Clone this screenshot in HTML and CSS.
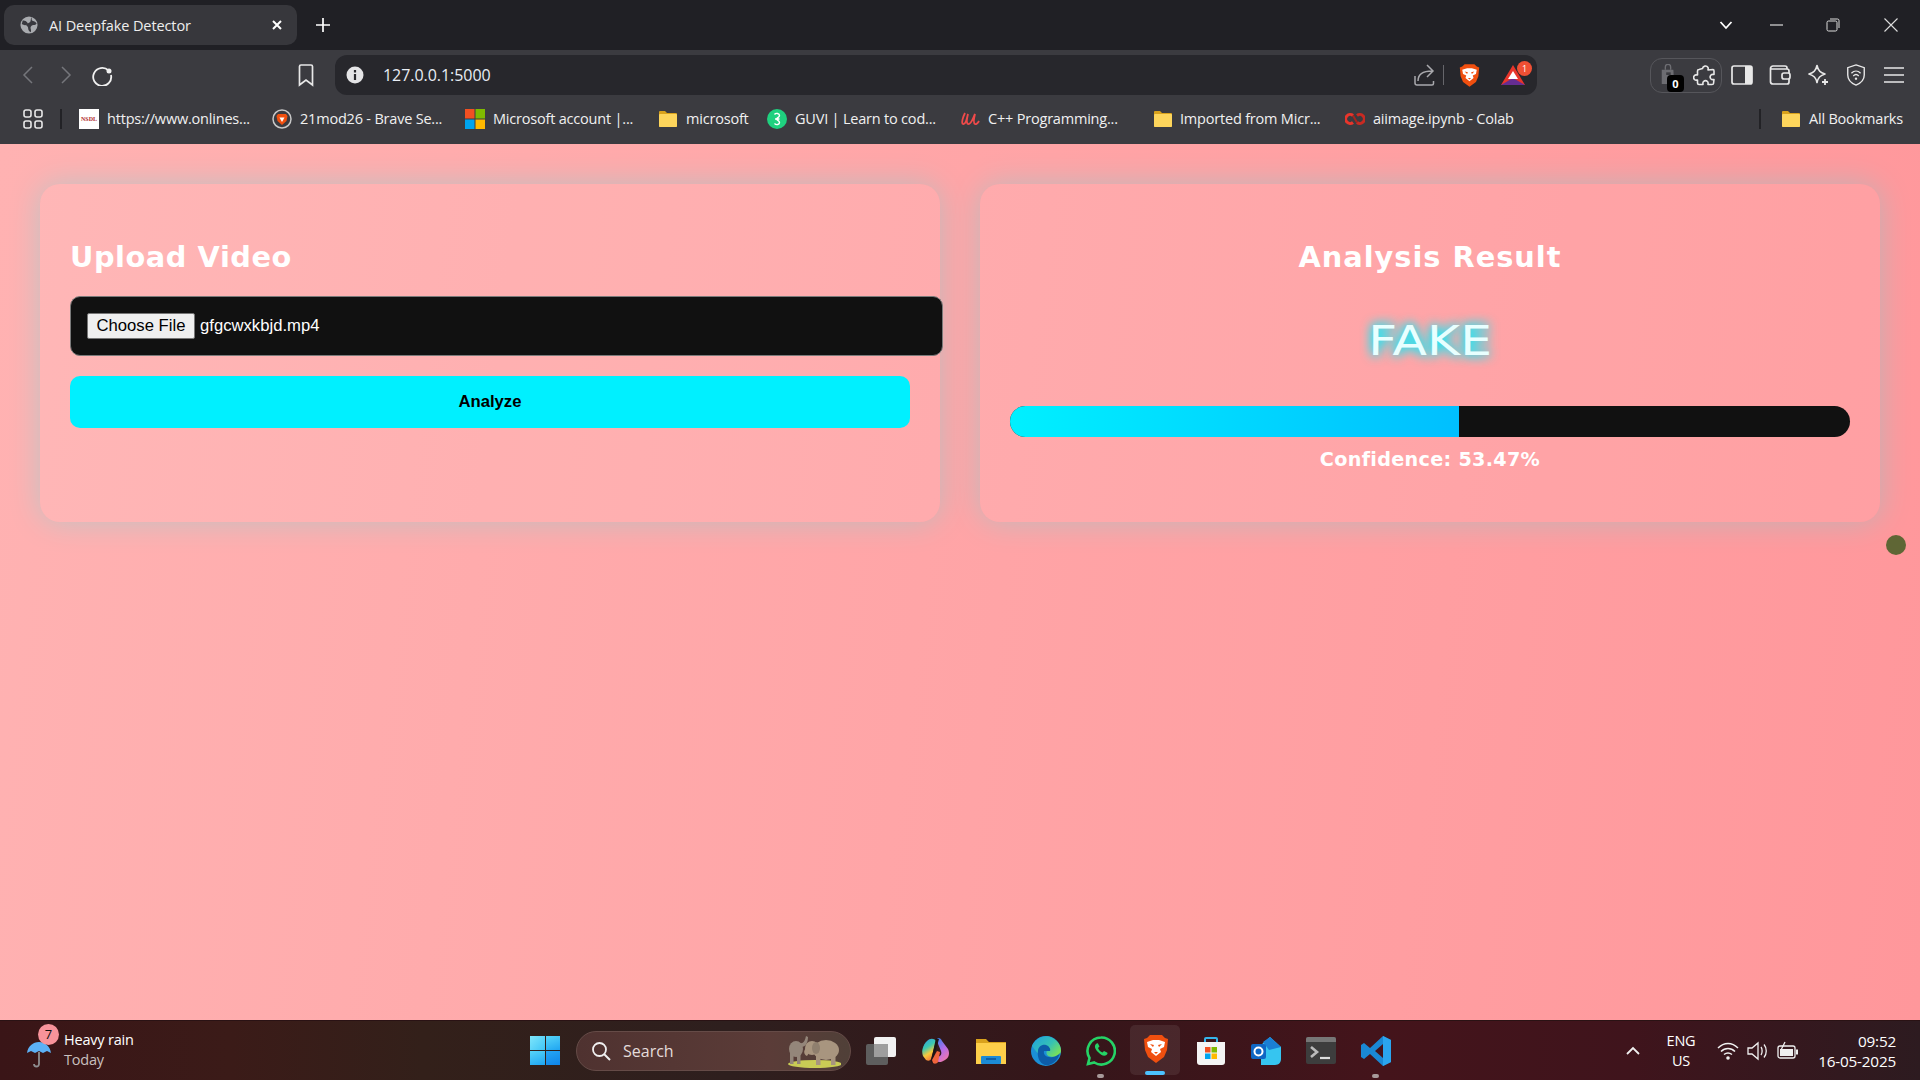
FILE: index.html
```html
<!DOCTYPE html>
<html lang="en">
<head>
<meta charset="utf-8">
<title>AI Deepfake Detector</title>
<link rel="stylesheet" href="styles.css">
</head>
<body>
<div class="screen">
  <header class="chrome">
    <div class="tabstrip">
      <div class="tab">
        <svg class="tab-globe" viewBox="0 0 20 20"><circle cx="10" cy="10" r="9.500" fill="#a9abaf"/><path d="M3 5c2-.5 4 .5 5 2s0 2.500-1.500 3S4 10 2 9zM12.500 1c1 2 0 3 1 4s3 .5 5 3c0 0-1 2-2.500 2s-3 0-4 2 1 3 0 6c-2-.5-3-3-3-5s-2-1.500-2-3 3-2 4-3 1-4 1.500-6z" fill="#38383e"/></svg>
        <span class="tab-title">AI Deepfake Detector</span>
        <svg class="tab-x" viewBox="0 0 12 12"><path d="M2 2l8 8M10 2l-8 8" stroke="#fff" stroke-width="2" fill="none"/></svg>
      </div>
      <div class="newtab"><svg class="i14" viewBox="0 0 14 14"><path d="M7 0v14M0 7h14" stroke="#fff" stroke-width="1.700"/></svg></div>
      <div class="spacer"></div>
      <div class="winbtn w-chev"><svg class="i14" viewBox="0 0 14 14"><path d="M1.500 4l5.500 6 5.500-6" stroke="#fff" stroke-width="1.800" fill="none"/></svg></div>
      <div class="winbtn w-min"><svg class="i14" viewBox="0 0 14 14"><path d="M0 7h13" stroke="#ddd" stroke-width="1.200"/></svg></div>
      <div class="winbtn w-res"><svg class="i14" viewBox="0 0 14 14"><rect x="1" y="3" width="10" height="10" rx="1.500" stroke="#ddd" fill="none"/><path d="M4 1h7.500a1.500 1.500 0 0 1 1.500 1.500V10" stroke="#ddd" fill="none"/></svg></div>
      <div class="winbtn w-close"><svg class="i14" viewBox="0 0 14 14"><path d="M.500.500l13 13M13.500.500l-13 13" stroke="#ddd" stroke-width="1.100"/></svg></div>
    </div>

    <div class="toolbar">
      <div class="tcell t-back"><svg class="i20" viewBox="0 0 20 20"><path d="M13 2L5 10l8 8" stroke="#75767b" stroke-width="1.500" fill="none"/></svg></div>
      <div class="tcell"><svg class="i20" viewBox="0 0 20 20"><path d="M7 2l8 8-8 8" stroke="#75767b" stroke-width="1.500" fill="none"/></svg></div>
      <div class="tcell t-reload"><svg class="i22" viewBox="0 0 22 22"><path d="M17.500 6.500A9 9 0 1 0 20 11" stroke="#f0f0f0" stroke-width="1.800" fill="none"/><circle cx="18" cy="7" r="2.500" fill="#f0f0f0"/></svg></div>
      <div class="spacer"></div>
      <div class="tcell bookmark-cell"><svg class="i24" viewBox="0 0 24 24"><path d="M5.500 3.500a1.500 1.500 0 0 1 1.500-1.500h10a1.500 1.500 0 0 1 1.500 1.500V22L12 17l-6.500 5z" stroke="#e8e8e8" stroke-width="1.700" fill="none"/></svg></div>
      <div class="omnibox">
        <svg class="omni-info" viewBox="0 0 18 18"><circle cx="9" cy="9" r="8.500" fill="#e4e4e6"/><path d="M9 4v2.500M9 8v6" stroke="#27272c" stroke-width="2.200"/></svg>
        <span class="url">127.0.0.1:5000</span>
        <div class="spacer"></div>
        <svg class="i22 omni-share" viewBox="0 0 22 22"><path d="M1 12v7a2 2 0 0 0 2 2h15a1.500 1.500 0 0 0 1.500-1.500V17M4 17c0-6 4-10 14-10M13 1l6 6-6 6" stroke="#a9a9ad" stroke-width="1.500" fill="none"/></svg>
        <span class="omni-sep"></span>
        <svg class="omni-brave" viewBox="0 0 26 30"><use href="#lion"/></svg>
        <span class="bat">
          <svg class="bat-tri" viewBox="0 0 24 20"><path d="M12 0l12 20H0z" fill="#e8352b"/><path d="M0 20l12-7 12 7z" fill="#662d91"/><path d="M12 6l5 8H7z" fill="#fff"/></svg>
          <span class="bat-badge">1</span>
        </span>
      </div>
      <div class="extgroup">
        <span class="shop">
          <svg class="shop-ic" viewBox="0 0 18 24"><path d="M2 6h13l1 16H2z" fill="#6d6d72"/><path d="M6 6V3a3 3 0 0 1 6 0v3" stroke="#6d6d72" stroke-width="1.500" fill="none"/><path d="M7 9h5v3H7z" fill="#3b3b40"/></svg>
          <span class="shop-badge">0</span>
        </span>
        <svg class="i24 ext-puzzle" viewBox="0 0 24 24"><path d="M9.500 5.500a3 3 0 0 1 5.500-1c.5 1 0 1.500 0 2.500l5-.5c1 0 1 .5 1 1.500v3.500c-1 0-2-.5-3 .5a3 3 0 0 0 0 4c1 1 2 .5 3 .5l-.5 4c0 1-.5 1-1.500 1h-4c0-1 .5-2-.5-3a3 3 0 0 0-4 0c-1 1-.5 2-.5 3H6c-1 0-1.500-.5-1.500-1.500V17c-1 0-2 .5-3-.5a3 3 0 0 1 0-4c1-1 2-.5 3-.5V8c0-1 .5-1.500 1.500-1.500z" stroke="#e8e8e8" stroke-width="1.600" fill="none" stroke-linejoin="round"/></svg>
      </div>
      <div class="tcell"><svg class="i22" viewBox="0 0 22 22"><rect x="1" y="2" width="20" height="18" rx="2" stroke="#e8e8e8" stroke-width="1.700" fill="none"/><rect x="14" y="2" width="7" height="18" fill="#e8e8e8"/></svg></div>
      <div class="tcell"><svg class="i22" viewBox="0 0 22 22"><path d="M18 5V4a2 2 0 0 0-2-2H4a2.500 2.500 0 0 0-2.500 2.500V18A2.500 2.500 0 0 0 4 20h14a2 2 0 0 0 2-2v-3M1.500 5H18a2 2 0 0 1 2 2v2" stroke="#e8e8e8" stroke-width="1.700" fill="none"/><rect x="13" y="9" width="8" height="6" rx="2" stroke="#e8e8e8" stroke-width="1.700" fill="none"/></svg></div>
      <div class="tcell"><svg class="i22" viewBox="0 0 22 22"><path d="M10 1.500c1 5 3 7 8 8.500-5 1.500-7 3.500-8 8.500-1-5-3-7-8-8.500 5-1.500 7-3.500 8-8.500z" stroke="#e8e8e8" stroke-width="1.700" fill="none" stroke-linejoin="round"/><path d="M18 15v6M15 18h6" stroke="#e8e8e8" stroke-width="1.800"/></svg></div>
      <div class="tcell"><svg class="i22" viewBox="0 0 22 24"><path d="M11 1l9 3v8c0 6-4 9-9 11-5-2-9-5-9-11V4z" stroke="#e8e8e8" stroke-width="1.500" fill="none"/><path d="M6 10c3-3 7-3 10 0M8 13c2-2 4-2 6 0" stroke="#e8e8e8" stroke-width="1.500" fill="none"/><circle cx="11" cy="16" r="1.300" fill="#e8e8e8"/></svg></div>
      <div class="tcell"><svg class="i22" viewBox="0 0 22 22"><path d="M1 4h20M1 11h20M1 18h20" stroke="#e8e8e8" stroke-width="1.700"/></svg></div>
    </div>

    <nav class="bookmarks">
      <svg class="apps" viewBox="0 0 20 20"><g stroke="#e8e8e8" stroke-width="1.600" fill="none"><rect x="1" y="1" width="7" height="7" rx="2"/><rect x="12" y="1" width="7" height="7" rx="2"/><rect x="1" y="12" width="7" height="7" rx="2"/><rect x="12" y="12" width="7" height="7" rx="2"/></g></svg>
      <span class="bm-sep bm-sep-a"></span>
      <div class="bm bm-1"><span class="nsdl"><span class="nsdl-t">NSDL</span></span><span class="bm-t">https://www.onlines...</span></div>
      <div class="bm bm-2"><svg class="fav" viewBox="0 0 20 20"><circle cx="10" cy="10" r="9" fill="#3a3a3f" stroke="#c8c8c8" stroke-width="1.500"/><path d="M6 5h8l1.500 2-1 5-4.500 4-4.500-4-1-5z" fill="#f04f0f"/><path d="M7.500 8.500h5L10 13z" fill="#fff"/></svg><span class="bm-t">21mod26 - Brave Se...</span></div>
      <div class="bm bm-3"><svg class="fav" viewBox="0 0 20 20"><path d="M0 0h9.500v9.500H0z" fill="#f25022"/><path d="M10.500 0H20v9.500h-9.500z" fill="#7fba00"/><path d="M0 10.500h9.500V20H0z" fill="#00a4ef"/><path d="M10.500 10.500H20V20h-9.500z" fill="#ffb900"/></svg><span class="bm-t">Microsoft account |...</span></div>
      <div class="bm bm-4"><svg class="fav" viewBox="0 0 20 20"><use href="#folder"/></svg><span class="bm-t">microsoft</span></div>
      <div class="bm bm-5"><svg class="fav" viewBox="0 0 20 20"><circle cx="10" cy="10" r="10" fill="#1fd17f"/><path d="M7.500 5.500c1.500-2 5-1 5 1s-3 2-3 3.500 3 1.500 3 3.500-3 3-5 1M8 10h4.500" stroke="#fff" stroke-width="1.400" fill="none"/></svg><span class="bm-t">GUVI | Learn to cod...</span></div>
      <div class="bm bm-6"><svg class="fav" viewBox="0 0 20 20"><path d="M5 4C3 8 1 14 3 15c3 1 4-7 5-10-1 4-2 9 0 10 3 1 5-6 7-10-1 4-2 9 0 10 1 .5 3-1 4-3" stroke="#ef4a4a" stroke-width="1.800" fill="none"/></svg><span class="bm-t">C++ Programming...</span></div>
      <div class="bm bm-7"><svg class="fav" viewBox="0 0 20 20"><use href="#folder"/></svg><span class="bm-t">Imported from Micr...</span></div>
      <div class="bm bm-8"><svg class="fav" viewBox="0 0 20 14"><path d="M8 3.500A4.500 4.500 0 1 0 8 10.500" stroke="#e8352b" stroke-width="3" fill="none"/><path d="M12 3.500a4.500 4.500 0 1 1 0 7" stroke="#c92a22" stroke-width="3" fill="none"/><path d="M8 3.500l4 7" stroke="#a8241d" stroke-width="2"/></svg><span class="bm-t">aiimage.ipynb - Colab</span></div>
      <div class="spacer"></div>
      <span class="bm-sep bm-sep-b"></span>
      <div class="bm bm-all"><svg class="fav" viewBox="0 0 20 20"><use href="#folder"/></svg><span class="bm-t">All Bookmarks</span></div>
    </nav>
  </header>

  <main class="page">
    <section class="card">
      <h2 class="card-title">Upload Video</h2>
      <div class="file-field">
        <button class="file-btn" type="button">Choose File</button>
        <span class="file-name">gfgcwxkbjd.mp4</span>
      </div>
      <button class="analyze" type="button">Analyze</button>
    </section>
    <section class="card card-result">
      <h2 class="card-title card-title-r">Analysis Result</h2>
      <div class="verdict">FAKE</div>
      <div class="meter"><div class="meter-fill"></div></div>
      <p class="confidence">Confidence: 53.47%</p>
    </section>
    <span class="cursor-dot"></span>
  </main>

  <footer class="taskbar">
    <div class="weather">
      <span class="umbrella">
        <svg class="umb-ic" viewBox="0 0 26 30"><path d="M1 14C2 7 7 3 13 3s11 4 12 11l-4-2-4 2-4-2-4 2-4-2z" fill="#5cb0f5"/><path d="M13 13v12a2.500 2.500 0 0 1-5 0" stroke="#8e8e90" stroke-width="1.800" fill="none"/></svg>
        <span class="umb-badge">7</span>
      </span>
      <div class="weather-t"><span class="w1">Heavy rain</span><span class="w2">Today</span></div>
    </div>
    <div class="win-logo"><span class="wl a"></span><span class="wl"></span><span class="wl"></span><span class="wl b"></span></div>
    <div class="search">
      <svg class="search-ic" viewBox="0 0 20 20"><circle cx="8.500" cy="8.500" r="6.500" stroke="#f0f0f0" stroke-width="1.800" fill="none"/><path d="M13 13l6 6" stroke="#f0f0f0" stroke-width="2"/></svg>
      <span class="search-t">Search</span>
      <svg class="eleph" viewBox="0 0 56 34"><ellipse cx="30" cy="30" rx="27" ry="4" fill="#c9cc55"/><g fill="#94867a"><ellipse cx="11" cy="15" rx="7" ry="8"/><path d="M5 18h3.500v12H5zM12 18h3.500v12H12z"/><path d="M15 9c4 1 5-3 6-7l2 1c0 5-2 10-7 10z"/></g><g fill="#a8957f"><ellipse cx="41" cy="16" rx="13" ry="10"/><ellipse cx="27" cy="14" rx="7" ry="7"/><path d="M31 21h4.500v10H31zM46 21h4.500v10H46z"/><path d="M21 14c-3 3-2 7 1 8l2-3-1-3z"/></g><ellipse cx="31" cy="14" rx="4" ry="6" fill="#8f7f6e"/></svg>
    </div>
    <div class="tasks">
      <div class="task"><svg class="i30" viewBox="0 0 30 30"><rect x="0" y="8" width="22" height="21" rx="2" fill="#5e5e5e"/><rect x="8" y="1" width="22" height="20" rx="2" fill="#f2f2f2"/><rect x="8" y="8" width="14" height="13" fill="#9e9e9e"/></svg></div>
      <div class="task"><svg class="i30" viewBox="0 0 30 30"><defs><linearGradient id="cpL" x1="0" y1="0" x2=".4" y2="1"><stop offset="0" stop-color="#2f9be8"/><stop offset=".45" stop-color="#3dc9b0"/><stop offset=".75" stop-color="#f7c93c"/><stop offset="1" stop-color="#f58a3a"/></linearGradient><linearGradient id="cpR" x1=".2" y1="0" x2=".7" y2="1"><stop offset="0" stop-color="#3f7fe8"/><stop offset=".5" stop-color="#b56ce8"/><stop offset="1" stop-color="#f277a8"/></linearGradient></defs><path d="M6 5c3-3 7-3 9 0l-5 18c-1 2-3 2-5 1L2 20c-2-5 0-11 4-15z" fill="url(#cpL)"/><path d="M15 3c2-2 5-1 6 2l6 8c2 4 1 9-3 11-3 2-6 3-9 1l2-4c3-1 4-3 3-6z" fill="url(#cpR)"/><path d="M15 2l3 1-6 21 3 4c-3 0-5-1-5-3z" fill="#1b1416"/><path d="M11 24l5-9 3 1-2 10c-1 2-4 2-5 1z" fill="#f0643c"/></svg></div>
      <div class="task"><svg class="i30" viewBox="0 0 30 30"><path d="M0 3h10l3 3h17v22H0z" fill="#d9a21c"/><rect y="7" width="30" height="21" fill="#fdcf4a"/><rect x="5" y="20" width="20" height="8" rx="1" fill="#1c8bd6"/><rect x="10" y="22" width="10" height="2" fill="#0e5fa6"/></svg></div>
      <div class="task"><svg class="i30" viewBox="0 0 30 30"><defs><linearGradient id="edA" x1="0" y1="0" x2="1" y2=".7"><stop offset="0" stop-color="#1f9fe0"/><stop offset=".6" stop-color="#35c1b5"/><stop offset="1" stop-color="#78e05a"/></linearGradient></defs><circle cx="15" cy="15" r="15" fill="#1b8fd6"/><path d="M1 10C4 3 11-1 18 .5c7 2 12 8 12 14 0 5-6 7-11 6-4-1-4-4-3-6-3-2-8-1-9 3-2-2-4-5-6-7.500z" fill="url(#edA)"/><path d="M7 15c0-4 4-7 8-6 3 1 5 4 4 6h-6c-1 4 3 7 9 6 3-.5 5-2 7-4-2 8-9 13-15 12-6-2-8-9-7-14z" fill="#0d5ca8"/></svg></div>
      <div class="task task-dot"><svg class="i30" viewBox="0 0 30 30"><path d="M15 1.500a13.500 13.500 0 0 0-11.500 20.500L2 28l6.300-1.500A13.500 13.500 0 1 0 15 1.500z" stroke="#25d366" stroke-width="2.600" fill="none"/><path d="M10 8c-2 2-1 5 2 8s6 5 8.500 3c1-1 1.500-2 .5-2.500l-3-1.500-1.500 1.500c-2-.5-4-3-4.500-4.500l1.500-1.500-1.500-3C11.500 7 10.800 7.300 10 8z" fill="#25d366"/></svg></div>
      <div class="task task-active"><svg class="brave-big" viewBox="0 0 26 30"><use href="#lion"/></svg></div>
      <div class="task"><svg class="i30" viewBox="0 0 30 30"><path d="M9 7V3a1 1 0 0 1 1-1h10a1 1 0 0 1 1 1v4" stroke="#35b4ea" stroke-width="2" fill="none"/><path d="M1 6h28v20a3 3 0 0 1-3 3H4a3 3 0 0 1-3-3z" fill="#f4f4f4"/><path d="M9 11h5.500v5.500H9z" fill="#f25022"/><path d="M15.500 11H21v5.500h-5.500z" fill="#7fba00"/><path d="M9 17.500h5.500V23H9z" fill="#00a4ef"/><path d="M15.500 17.500H21V23h-5.500z" fill="#ffb900"/></svg></div>
      <div class="task"><svg class="i30" viewBox="0 0 30 30"><path d="M10 9l9-8 11 10v12c0 3-2 6-6 6H10z" fill="#36c5f0"/><path d="M12 6l7-5 11 10-12 3z" fill="#1a7fd4"/><rect y="8" width="15" height="15" rx="2" fill="#0f67c4"/><circle cx="7.500" cy="15.500" r="4" stroke="#fff" stroke-width="2" fill="none"/></svg></div>
      <div class="task"><svg class="i30" viewBox="0 0 30 30"><rect width="30" height="27" y="1" rx="2" fill="#3d3d3d"/><path d="M2 1h26a2 2 0 0 1 2 2v3H0V3a2 2 0 0 1 2-2z" fill="#777"/><path d="M5 11l6 5-6 5" stroke="#bbb" stroke-width="2.600" fill="none"/><path d="M14 22h10" stroke="#ddd" stroke-width="2.200"/></svg></div>
      <div class="task task-dot"><svg class="i30" viewBox="0 0 30 30"><path fill-rule="evenodd" d="M22 0l8 4v22l-8 4-13-12-6 5-3-2v-12l3-2 6 5zM22 8l-8 7 8 7z" fill="#1a88d4"/><path d="M22 0l8 4v22l-8 4V22l0-14z" fill="#2ba5ee"/></svg></div>
    </div>
    <div class="tray">
      <svg class="tray-chev" viewBox="0 0 14 10"><path d="M1 8l6-6 6 6" stroke="#f0f0f0" stroke-width="1.800" fill="none"/></svg>
      <div class="lang"><span>ENG</span><span>US</span></div>
      <svg class="tray-ic" viewBox="0 0 22 20"><path d="M1 7c6-6 14-6 20 0M4 10.500c4-4 10-4 14 0M7 13.500c2.500-2 5.500-2 8 0" stroke="#f0f0f0" stroke-width="1.500" fill="none"/><circle cx="11" cy="17" r="1.800" fill="#f0f0f0"/></svg>
      <svg class="tray-ic" viewBox="0 0 22 20"><path d="M1 7h4l6-5v16l-6-5H1z" stroke="#f0f0f0" stroke-width="1.300" fill="none"/><path d="M14 6c1.500 2 1.500 6 0 8M17 3.500c3 3.500 3 9.500 0 13" stroke="#f0f0f0" stroke-width="1.300" fill="none"/></svg>
      <svg class="tray-ic" viewBox="0 0 22 20"><rect x="1" y="5" width="17" height="12" rx="2" stroke="#f0f0f0" stroke-width="1.300" fill="none"/><rect x="3" y="8" width="13" height="7" fill="#f0f0f0"/><rect x="19" y="8.500" width="2" height="5" fill="#f0f0f0"/><path d="M8 1L4 9h4l-1 5" stroke="#f0f0f0" stroke-width="1.300" fill="none"/></svg>
      <div class="clock"><span>09:52</span><span>16-05-2025</span></div>
    </div>
  </footer>
</div>
<svg class="defs" viewBox="0 0 20 20"><defs>
  <g id="folder"><path d="M1 3a1 1 0 0 1 1-1h5l2 2h9a1 1 0 0 1 1 1v12a1 1 0 0 1-1 1H2a1 1 0 0 1-1-1z" fill="#d9a21c"/><rect x="1" y="5" width="18" height="13" rx="1" fill="#fdd55c"/></g>
  <g id="lion"><path d="M7 1h12l3 3 3 1-1 11-3 7-8 6-8-6-3-7L1 5l3-1z" fill="#f04f0f"/><path d="M4 8l6-2h6l6 2-1 5-4 2 1 3-5 4-5-4 1-3-4-2z" fill="#fff"/><path d="M7 10l4 1-1 2zM19 10l-4 1 1 2zM11 18h4l-2 2z" fill="#f04f0f"/></g>
</defs></svg>
</body>
</html>
```
FILE: styles.css
```css
* { box-sizing: border-box; }
html, body { margin: 0; padding: 0; height: 100%; overflow: hidden; }
body { font-family: "Open Sans", "Noto Sans", sans-serif; }
.screen { width: 1920px; height: 1080px; display: flex; flex-direction: column; }
.spacer { flex: 1; }
.defs { width: 0; height: 0; position: absolute; }
.i14 { width: 14px; height: 14px; }
.i20 { width: 20px; height: 20px; }
.i22 { width: 22px; height: 22px; }
.i24 { width: 24px; height: 24px; }
.i30 { width: 30px; height: 30px; }

/* browser chrome */
.chrome { flex: 0 0 144px; display: flex; flex-direction: column; background: #3b3b40; color: #f0f0f0; }
.tabstrip { height: 50px; background: #202025; display: flex; align-items: center; padding-left: 4px; }
.tab { width: 293px; height: 40px; background: #37373c; border-radius: 10px; display: flex; align-items: center; padding-left: 16px; }
.tab-globe { width: 18px; height: 18px; flex: none; }
.tab-title { font-size: 14.500px; letter-spacing: -0.100px; margin-left: 11px; flex: 1; color: #eee; }
.tab-x { width: 12px; height: 12px; margin-right: 14px; }
.newtab { width: 52px; display: flex; justify-content: center; }
.winbtn { display: flex; justify-content: center; }
.w-chev { width: 40px; margin-right: 16px; }
.w-min { width: 30px; margin-right: 26px; }
.w-res { width: 30px; margin-right: 28px; }
.w-close { width: 30px; margin-right: 14px; }

.toolbar { height: 45px; display: flex; align-items: center; padding: 5px 7px 0 8px; }
.tcell { width: 38px; height: 40px; display: flex; align-items: center; justify-content: center; flex: none; }
.t-back { margin-left: 2px; margin-right: -2px; }
.t-reload { margin-left: -1px; margin-right: 1px; }
.bookmark-cell { margin-right: 10px; }
.omnibox { width: 1202px; height: 40px; background: #27272c; border-radius: 12px; display: flex; align-items: center; padding-left: 11px; flex: none; }
.omni-info { width: 18px; height: 18px; }
.url { font-size: 16px; margin-left: 19px; letter-spacing: -0.050px; color: #e9eef5; }
.omni-share { margin-right: 7px; }
.omni-sep { width: 1px; height: 20px; background: #66666b; margin-right: 15px; }
.omni-brave { width: 21px; height: 25px; }
.bat { position: relative; width: 24px; height: 20px; margin: 0 12px 0 21px; }
.bat-tri { width: 24px; height: 20px; display: block; }
.bat-badge { position: absolute; top: -4px; right: -7px; width: 15px; height: 15px; border-radius: 50%; background: #ef4f34; color: #fff; font-size: 9px; line-height: 15px; text-align: center; }
.extgroup { width: 72px; height: 35px; margin-left: 113px; margin-right: 1px; border: 1px solid #56565b; border-radius: 12px; display: flex; align-items: center; padding-left: 9px; flex: none; }
.shop { position: relative; width: 16px; height: 22px; }
.shop-ic { width: 16px; height: 22px; display: block; }
.shop-badge { position: absolute; left: 7px; top: 11px; width: 17px; height: 17px; border-radius: 4px; background: #000; color: #fff; font-size: 11px; font-weight: 700; line-height: 17px; text-align: center; }
.ext-puzzle { margin-left: 17px; }

.bookmarks { height: 49px; display: flex; align-items: center; padding: 0 0 2px 23px; font-size: 14.500px; }
.apps { width: 20px; height: 20px; flex: none; }
.bm-sep { width: 2px; height: 20px; background: #222226; flex: none; }
.bm-sep-a { margin-left: 17px; }
.bm-sep-b { margin-right: 20px; }
.bm { display: flex; align-items: center; flex: none; white-space: nowrap; }
.fav { width: 20px; height: 20px; flex: none; }
.bm-t { margin-left: 8px; letter-spacing: -0.200px; color: #f0f0f0; }
.nsdl { width: 20px; height: 20px; background: #fff; display: flex; align-items: center; justify-content: center; flex: none; }
.nsdl-t { font: 700 6px "Liberation Serif", serif; color: #b02a2a; }
.bm-1 { margin-left: 17px; width: 193px; }
.bm-2 { width: 193px; }
.bm-3 { width: 193px; }
.bm-4 { width: 109px; }
.bm-5 { width: 193px; }
.bm-6 { width: 193px; }
.bm-7 { width: 192px; }
.bm-8 { width: 190px; }
.bm-7 .bm-t { margin-left: 7px; }
.bm-all { margin-right: 17px; }

/* page */
.page { flex: 1; position: relative; background: linear-gradient(97deg, #ffb2b2 0%, #ff979b 100%); padding: 40px; display: grid; grid-template-columns: 900px 900px; column-gap: 40px; align-items: start; }
.card { height: 338px; background: rgba(255, 255, 255, 0.07); border-radius: 20px; box-shadow: 0 0 30px rgba(0, 255, 255, 0.25); padding: 30px; }
.card-result { text-align: center; }
.card-title { margin: 0; padding-top: 22px; height: 82px; font: 700 28.800px/42px "DejaVu Sans", sans-serif; letter-spacing: 0.550px; color: #fff; }
.card-title-r { letter-spacing: 1px; }
.file-field { width: 873px; height: 60px; background: #111; border: 1px solid #7a7a7a; border-radius: 10px; display: flex; align-items: center; padding-left: 16px; color: #fff; font: 16.670px "Liberation Sans", sans-serif; }
.file-btn { width: 108px; height: 26px; padding: 0; background: #efefef; border: 1px solid #767676; border-radius: 2px; font: 16.670px "Liberation Sans", sans-serif; color: #000; }
.file-name { margin-left: 5px; }
.analyze { display: block; width: 840px; height: 52px; margin-top: 20px; background: #00f0ff; border: 0; border-radius: 10px; font: 700 16.670px "Liberation Sans", sans-serif; color: #000; }
.verdict { display: inline-block; font: 400 40px/60px "DejaVu Sans", sans-serif; margin-top: 15px; color: #e8ffff; letter-spacing: 0; transform: scaleX(1.26); text-shadow: 0 0 10px #00f0ff, 0 0 10px #00f0ff; vertical-align: top; }
.meter { height: 31px; margin-top: 35px; background: #111; border-radius: 16px; overflow: hidden; }
.meter-fill { width: 53.47%; height: 100%; background: linear-gradient(90deg, #00f0ff, #00bfff); }
.confidence { margin: 9px 0 0; font: 700 19.200px/28px "DejaVu Sans", sans-serif; color: #fff; letter-spacing: 0.300px; }
.cursor-dot { position: absolute; left: 1886px; top: 391px; width: 20px; height: 20px; border-radius: 50%; background: #5f6635; }

/* taskbar */
.taskbar { flex: 0 0 60px; display: flex; align-items: center; position: relative; border-top: 1px solid #2a1214; background: linear-gradient(90deg, #3a1517 0%, #3b1b18 12%, #33201a 22%, #2e1f1e 38%, #35161a 55%, #44141b 72%, #3f141c 85%, #2d1b20 100%); color: #fff; }
.weather { width: 530px; display: flex; align-items: center; padding: 0 0 2px 26px; flex: none; }
.umbrella { position: relative; width: 26px; height: 30px; margin-top: 8px; }
.umb-ic { width: 26px; height: 30px; display: block; }
.umb-badge { position: absolute; left: 12px; top: -15px; width: 21px; height: 21px; border-radius: 50%; background: #f8939a; color: #111; font-size: 13px; line-height: 21px; text-align: center; }
.weather-t { display: flex; flex-direction: column; margin-left: 12px; font-size: 14.500px; line-height: 20px; letter-spacing: -0.200px; }
.w2 { color: #c9c0bf; }
.win-logo { width: 30px; height: 29px; display: grid; grid-template-columns: 1fr 1fr; gap: 1px; flex: none; }
.wl { background: linear-gradient(160deg, #57d4f8, #1fa5f2); }
.wl.a { background: linear-gradient(135deg, #7fe6fb, #3fc4f6); }
.wl.b { background: linear-gradient(160deg, #26a6f5, #0e84e8); }
.search { width: 275px; height: 40px; margin-left: 16px; border-radius: 20px; background: linear-gradient(90deg, #4f3230, #5b3c38 70%, #504038); border: 1px solid #654b47; display: flex; align-items: center; padding-left: 14px; flex: none; position: relative; }
.search-ic { width: 20px; height: 20px; }
.search-t { margin-left: 12px; font-size: 16px; color: #e4dcdb; }
.eleph { position: absolute; right: 9px; top: 2px; width: 56px; height: 34px; }
.tasks { display: flex; margin-left: 2px; align-items: center; flex: none; }
.task { width: 55px; height: 59px; display: flex; align-items: center; justify-content: center; position: relative; flex: none; }
.task-dot::after { content: ""; position: absolute; bottom: 2px; left: 24px; width: 7px; height: 4px; border-radius: 2px; background: #a89a9a; }
.task-active::before { content: ""; position: absolute; left: 2px; top: 4px; width: 50px; height: 50px; background: rgba(255, 255, 255, 0.08); border-radius: 5px; }
.task-active::after { content: ""; position: absolute; bottom: 5px; left: 17px; width: 20px; height: 4px; border-radius: 2px; background: #4cc2ff; }
.brave-big { width: 26px; height: 30px; position: relative; margin-top: -3px; }
.tray { display: flex; align-items: center; margin-left: 223px; flex: 1; font-size: 14.500px; letter-spacing: -0.200px; }
.tray-chev { width: 14px; height: 10px; margin-left: 0; }
.lang { display: flex; flex-direction: column; align-items: center; line-height: 20px; width: 40px; margin-left: 21px; }
.tray-ic { width: 22px; height: 20px; margin-left: 8px; }
.lang + .tray-ic { margin-left: 16px; }
.clock { display: flex; flex-direction: column; align-items: flex-end; line-height: 20px; margin-left: auto; margin-right: 24px; font-size: 15.300px; }
```
